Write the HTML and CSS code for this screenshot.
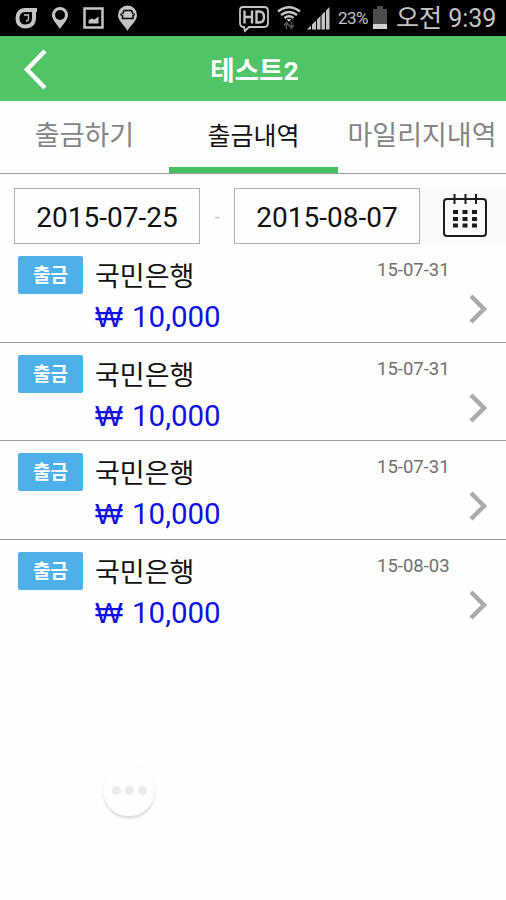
FILE: index.html
```html
<!DOCTYPE html>
<html lang="ko">
<head>
    <meta charset="UTF-8">
    <meta name="viewport" content="width=device-width, initial-scale=1.0">
    <title>출금내역</title>
    <link rel="stylesheet" href="styles.css">
</head>
<body>
    <div class="status-bar">
        <svg class="status-left" width="140" height="36" viewBox="0 0 140 36" fill="none" stroke="#c4c4c4">
            <path d="M37 10H25c-5 0-7.500 3.500-7.500 8.500s3 8 8 8 8.500-3 8.500-8.500v-8" stroke-width="4"/>
            <path d="M24 15h4.500v3.500q0 2.500-2.500 2.500" stroke-width="1.300"/>
            <path d="M60 29c-3-5-8-9-8-14a8 8 0 0 1 16 0c0 5-5 9-8 14z" fill="#c4c4c4" stroke="none"/>
            <circle cx="60" cy="15" r="5" fill="#000" stroke="none"/>
            <path d="M84.500 8.500h18v19h-18z" stroke-width="2.500"/>
            <path d="M88.500 23.500v-3l3-2 3 1 4-3v7z" fill="#c4c4c4" stroke="none"/>
            <path d="M127.500 31c-3-6-9.500-10-9.500-16a9.500 9.500 0 0 1 19 0c0 6-6.500 10-9.500 16z" fill="#c4c4c4" stroke="none"/>
            <path d="M122.500 14l1.500-3.500h7.500l1.500 3.500M121 13.500v2M134 13.500v2M122.500 15v3.500h10.500v-3.500" stroke="#000" stroke-width="1.500"/>
        </svg>
        <div class="status-right">
            <svg width="94" height="36" viewBox="0 0 94 36" fill="none" stroke="#c4c4c4">
                <path d="M5 7h21q4 0 4 4v12q0 4-4 4H11l-4 4-1-4q-4 0-4-4V10q0-3 3-3z" stroke-width="1.800"/>
                <path d="M6.500 10.500v13M14 10.500v13M6.500 17H14M18.500 11.500h2.500q5 0 5 5.500t-5 5.500h-2.500z" stroke-width="2.400"/>
                <path d="M40 11.500q11-8.500 22 0M43 15q8-6 16 0M46.500 18q4.500-3.500 9 0" stroke-width="2.400"/>
                <path d="M51 22l-2.500-3h5z" fill="#c4c4c4" stroke="none"/>
                <path d="M48.500 29v-6M46 25.500l2.500-3 2.500 3M53.500 22v6M51 25l2.500 3 2.500-3" stroke="#555" stroke-width="1.500"/>
                <path d="M69 29.500L91.500 7v22.500z" fill="#c4c4c4" stroke="none"/>
                <path d="M73.500 7v23M78.500 7v23M83 7v23M87.500 7v23" stroke="#000" stroke-width="1"/>
            </svg>
            <span class="percent">23%</span>
            <svg class="battery" width="16" height="26" viewBox="0 0 16 26">
                <path d="M5 1h6v3h4v20H1V4h4z" fill="#4d4d4d"/>
                <path d="M1 19h14v5H1z" fill="#d0d0d0"/>
            </svg>
            <span class="clock">오전 9:39</span>
        </div>
    </div>

    <div class="header">
        <svg class="back" width="30" height="46" viewBox="0 0 30 46">
            <path d="M25 5L7 23.500 25 42" fill="none" stroke="#fff" stroke-width="4.500"/>
        </svg>
        <h1>테스트2</h1>
    </div>

    <div class="tabs">
        <div class="tab">출금하기</div>
        <div class="tab active">출금내역</div>
        <div class="tab">마일리지내역</div>
    </div>

    <div class="date-filter">
        <div class="date-box">2015-07-25</div>
        <span class="dash">-</span>
        <div class="date-box">2015-08-07</div>
        <div class="calendar">
            <svg width="46" height="46" viewBox="0 0 46 46" fill="none" stroke="#1c1c1c">
                <rect x="2" y="7" width="42" height="37" rx="3" stroke-width="2"/>
                <path d="M12.500 2v10M23.500 2v10M34 2v10" stroke-width="2"/>
                <path d="M11 20h25M11 27h25M11 33.500h25" stroke-width="4" stroke-dasharray="5 4.500"/>
            </svg>
        </div>
    </div>

    <div class="list">
        <div class="item">
            <span class="badge">출금</span>
            <div class="info">
                <div class="bank">국민은행</div>
                <div class="amount"><span class="won">₩</span>10,000</div>
            </div>
            <div class="date">15-07-31</div>
            <svg class="arrow" width="22" height="32" viewBox="0 0 22 32"><path d="M3 3l13 13L3 29" fill="none" stroke="#ababab" stroke-width="4.500"/></svg>
        </div>
        <div class="item">
            <span class="badge">출금</span>
            <div class="info">
                <div class="bank">국민은행</div>
                <div class="amount"><span class="won">₩</span>10,000</div>
            </div>
            <div class="date">15-07-31</div>
            <svg class="arrow" width="22" height="32" viewBox="0 0 22 32"><path d="M3 3l13 13L3 29" fill="none" stroke="#ababab" stroke-width="4.500"/></svg>
        </div>
        <div class="item">
            <span class="badge">출금</span>
            <div class="info">
                <div class="bank">국민은행</div>
                <div class="amount"><span class="won">₩</span>10,000</div>
            </div>
            <div class="date">15-07-31</div>
            <svg class="arrow" width="22" height="32" viewBox="0 0 22 32"><path d="M3 3l13 13L3 29" fill="none" stroke="#ababab" stroke-width="4.500"/></svg>
        </div>
        <div class="item">
            <span class="badge">출금</span>
            <div class="info">
                <div class="bank">국민은행</div>
                <div class="amount"><span class="won">₩</span>10,000</div>
            </div>
            <div class="date">15-08-03</div>
            <svg class="arrow" width="22" height="32" viewBox="0 0 22 32"><path d="M3 3l13 13L3 29" fill="none" stroke="#ababab" stroke-width="4.500"/></svg>
        </div>
    </div>

    <div class="more-button"><i></i><i></i><i></i></div>
</body>
</html>
```
FILE: styles.css
```css
* {
    box-sizing: border-box;
}
body {
    margin: 0;
    height: 900px;
    overflow: hidden;
    background-color: #fefefe;
    color: #111;
    font-family: Roboto, 'Noto Sans CJK KR', sans-serif;
}
svg {
    display: block;
    flex-shrink: 0;
}
.status-bar {
    display: flex;
    justify-content: space-between;
    height: 36px;
    background-color: #000;
    color: #c4c4c4;
}
.status-right {
    display: flex;
    align-items: center;
    padding-right: 11px;
    white-space: nowrap;
}
.percent {
    width: 33px;
    margin-left: 6px;
    font-size: 17px;
    letter-spacing: -0.5px;
}
.battery {
    margin: 0 8px 0 1px;
}
.clock {
    width: 99px;
    padding-top: 2px;
    font-size: 25px;
    line-height: 36px;
}
.header {
    display: grid;
    grid-template-columns: 60px 1fr 60px;
    align-items: center;
    height: 65px;
    background-color: #51c468;
}
.back {
    margin-left: 20px;
}
h1 {
    margin: 0;
    padding: 4px 0 0 3px;
    color: #fff;
    font-size: 26.5px;
    font-weight: bold;
    line-height: 61px;
    text-align: center;
}
.tabs {
    display: grid;
    grid-template-columns: 169px 169px 168px;
    height: 73px;
    border-bottom: 1px solid #999;
}
.tab {
    height: 72px;
    color: #858585;
    font-size: 27px;
    line-height: 71px;
    text-align: center;
    white-space: nowrap;
}
.tab.active {
    border-bottom: 6px solid #44c060;
    color: #111;
    font-size: 25px;
}
.date-filter {
    display: flex;
    align-items: center;
    height: 56px;
    margin-top: 14px;
    padding-left: 14px;
}
.date-box {
    width: 186px;
    height: 56px;
    border: 1px solid #b0b0b0;
    font-size: 28px;
    line-height: 57px;
    text-align: center;
}
.dash {
    width: 34px;
    color: #c2c2c2;
    font-size: 18px;
    text-align: center;
}
.calendar {
    flex: 1;
    height: 56px;
    padding: 4px 0 0 22px;
    background-color: #fafafa;
}
.item {
    display: grid;
    grid-template-columns: 77px 1fr 73px 56px;
    height: 98.5px;
    padding-left: 18px;
    border-bottom: 1px solid #999;
}
.item:last-child {
    border-bottom: 0;
}
.badge {
    width: 65px;
    height: 38px;
    margin-top: 12px;
    border-radius: 2px;
    background-color: #4eb0e8;
    color: #fff;
    font-size: 19px;
    font-weight: bold;
    line-height: 39px;
    text-align: center;
}
.info {
    padding-top: 11px;
}
.bank {
    height: 40px;
    font-size: 27px;
    line-height: 44px;
}
.amount {
    height: 42px;
    color: #1010e0;
    font-size: 29.5px;
    line-height: 44px;
}
.won {
    display: inline-block;
    width: 37px;
    font-family: 'Liberation Sans', sans-serif;
}
.date {
    padding-top: 14px;
    color: #707070;
    font-size: 18.5px;
    line-height: 24px;
    white-space: nowrap;
}
.arrow {
    margin: 49px 0 0 18px;
}
/* floating button over the page */
.more-button {
    position: absolute;
    top: 765px;
    left: 103px;
    display: flex;
    justify-content: center;
    align-items: center;
    gap: 4px;
    width: 52px;
    height: 51px;
    border-radius: 50%;
    background-color: #fefefe;
    box-shadow: 0 3px 2px #e2e2e2, 0 0 2px #f4f4f4;
}
.more-button i {
    width: 9px;
    height: 9px;
    border-radius: 50%;
    background-color: #ebebeb;
}
```
